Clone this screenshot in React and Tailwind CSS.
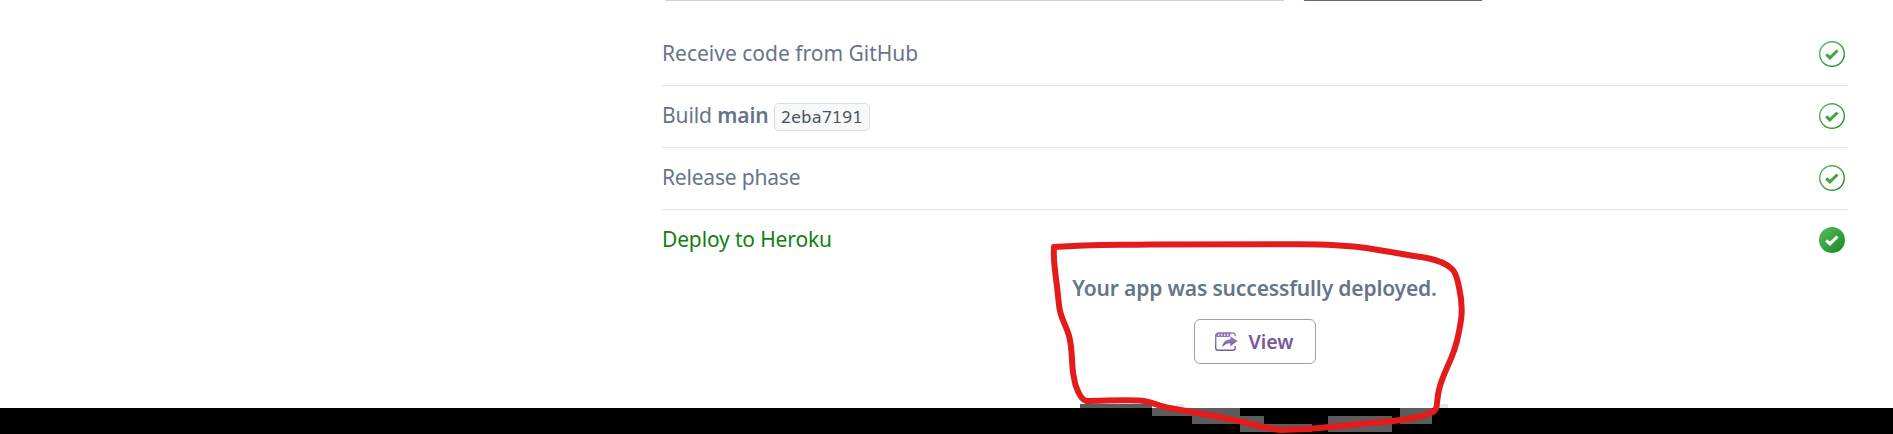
const CHECK = 'M7.2 13.4 10.900 16.9 18.500 9.500';

function StatusIcon({ filled }) {
  return (
    <svg className="h-[26px] w-[26px] shrink-0" viewBox="0 0 26 26" fill="none">
      <defs>
        <linearGradient id="status" x1="0" y1="0" x2="1" y2="1">
          <stop offset="0" stopColor="#5fb966" />
          <stop offset="1" stopColor="#148a1c" />
        </linearGradient>
      </defs>
      {filled ? (
        <circle cx="13" cy="13" r="13" fill="url(#status)" />
      ) : (
        <circle cx="13" cy="13" r="12.3" stroke="url(#status)" strokeWidth="1.4" />
      )}
      <path d={CHECK} stroke={filled ? '#fff' : '#3fa548'} strokeWidth="3" />
    </svg>
  );
}

function Step({ children, last }) {
  return (
    <li
      className={
        last
          ? 'flex h-[61px] items-center justify-between pr-[3px] pb-px text-[#118011]'
          : 'flex h-[62px] items-center justify-between border-b border-[#e3e5e8] pr-[3px] pb-px'
      }
    >
      <span className="flex items-center pb-px">{children}</span>
      <StatusIcon filled={last} />
    </li>
  );
}

function OpenAppIcon() {
  return (
    <svg className="h-[20px] w-[23px]" viewBox="0 0 23 20" fill="none">
      <defs>
        <linearGradient id="open" x1="0" y1="0" x2="0" y2="1">
          <stop offset="0" stopColor="#a07fc4" />
          <stop offset="1" stopColor="#75599c" />
        </linearGradient>
      </defs>
      <path
        d="M20.2 4.2V3.600A2.600 2.600 0 0 0 17.600 1H3.300A2.600 2.600 0 0 0 .7 3.600v12.100a2.600 2.600 0 0 0 2.600 2.600h14.300a2.600 2.600 0 0 0 2.600-2.600v-1.600"
        stroke="url(#open)"
        strokeWidth="1.4"
      />
      <path d="M.7 5V3.2A2.400 2.400 0 0 1 3.100.7h12.900L14.400 5z" fill="#9775bd" />
      <path d="M3 3h1.300M6 3h1.300M9 3h1.300M12 3h1.300" stroke="#fff" strokeWidth="1.3" />
      <path d="M15.300 4.200 22.600 9l-7.300 5.300v-3c-3.300-.1-5.500 1.100-8 3.900.5-5 3.300-7.600 8-8z" fill="url(#open)" />
    </svg>
  );
}

function Highlight() {
  return (
    <svg className="pointer-events-none absolute inset-0 h-[434px] w-[1893px]" viewBox="0 0 1893 434" fill="none">
      <path
        d="M1080 404h72v4h-72zM1152 408h88v8h-88zM1192 416h72v8h-72zM1240 424h72v8h-72zM1328 416h64v8h-64zM1328 424h64v8h-64zM1400 408h32v16h-32z"
        fill="#5c5c5c"
      />
      <path d="M1176 404h8v4h-8zM1440 404h8v4h-8z" fill="#e6e6e6" />
      <path
        d="M1054 247C1090 244 1110 245 1150 244.400L1300 244.300C1325 244.500 1345 245.300 1362 247.500C1382 250 1405 255 1427 258C1437 260 1447 264 1452 269C1457 274 1457.500 281 1459 287C1461 296 1462.500 310 1461 320C1459 334 1457 344 1452 356C1447 369 1440 380 1438 395L1437 403Q1437 411 1431 413C1415 419 1402 420 1387 421.500L1347 425.500L1307 429L1280 430L1260 426.500C1238 420 1220 417 1197 413L1167 407.500C1155 405 1151 401 1138 400.500C1120 399.500 1105 401 1086 401C1080 399 1075 386 1074 378C1071 366 1073 349 1069 336C1067 328 1062 320 1060 311C1058 301 1058 291 1056 279C1055 267 1053 261 1054 247"
        stroke="#e41b1b"
        strokeWidth="6"
        strokeLinejoin="round"
        strokeLinecap="round"
      />
    </svg>
  );
}

export default function App() {
  return (
    <div className="relative flex h-[434px] w-[1893px] flex-col overflow-hidden bg-white font-['Noto_Sans','Open_Sans',sans-serif] text-[21px] text-[#66758a]">
      <main className="ml-[662px] h-[408px] w-[1186px] shrink-0">
        <div className="flex h-[24px] items-start gap-[20px]">
          <div className="ml-[3px] h-px w-[619px] bg-[#cfd0d5]" />
          <div className="h-px w-[178px] bg-[#6c5f8b]" />
        </div>
        <ul>
          <Step>Receive code from GitHub</Step>
          <Step>
            <span className="tracking-[-0.1px] whitespace-pre">
              Build <b className="font-semibold">main</b>
            </span>
            <code className="mt-[2px] ml-[5px] flex h-[28px] w-[96px] items-center justify-center rounded-[5px] border border-[#dadde1] bg-[#f6f8fa] font-['Noto_Sans_Mono','DejaVu_Sans_Mono',monospace] text-[17px] text-[#465261]">
              2eba7191
            </code>
          </Step>
          <Step>
            <span className="tracking-[-0.2px]">Release phase</span>
          </Step>
          <Step last>
            <span className="tracking-[-0.15px]">Deploy to Heroku</span>
          </Step>
        </ul>
        <div className="-ml-px flex flex-col items-center">
          <p className="mt-[3px] h-[28px] leading-[28px] font-semibold tracking-[-0.15px] whitespace-nowrap">
            Your app was successfully deployed.
          </p>
          <button className="mt-[17px] flex h-[45px] w-[122px] items-center rounded-[6px] border border-[#a698c0] bg-white pl-[20px] text-[19.5px] font-semibold text-[#75599c]">
            <OpenAppIcon />
            <span className="ml-[11px]">View</span>
          </button>
        </div>
      </main>
      <footer className="h-[26px] shrink-0 bg-black" />
      <Highlight />
    </div>
  );
}
